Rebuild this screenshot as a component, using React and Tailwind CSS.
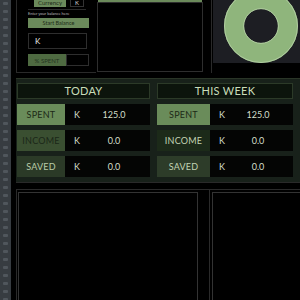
import React from "react";

const ticks = Array.from({ length: 38 });

function Row({ label, value, labelCls, labelW }) {
  return (
    <div className="flex h-[21px] mt-[5px]">
      <div className={`${labelW} flex items-center justify-center text-[9px] tracking-wide ${labelCls}`}>{label}</div>
      <div className="flex-1 bg-[#040504] flex items-center text-[9px] text-[#d4dfcb]">
        <span className="ml-[9px]">K</span>
        <span className="flex-1 text-center pr-[2px]">{value}</span>
      </div>
    </div>
  );
}

export default function App() {
  return (
    <div className="w-[300px] h-[300px] overflow-hidden bg-black flex" style={{ fontFamily: "Lato, 'Noto Sans', sans-serif" }}>
      <div className="w-[11px] h-full bg-[#373c41] flex flex-col items-center gap-[5px] pt-[2px] shrink-0">
        {ticks.map((_, i) => (
          <div key={i} className="w-[5px] h-[3px] bg-[#50565c] rounded-[1px] shrink-0" />
        ))}
      </div>
      <div className="ml-[5px] flex-1 flex flex-col">
        {/* top row */}
        <div className="h-[73px] flex shrink-0">
          <div className="w-[80px] border-l border-b border-[#2a2a2a] relative overflow-hidden">
            <div className="ml-[11px] mr-[6px] -mt-[3px] flex flex-col">
              <div className="flex h-[10px] gap-[4px] pb-0">
                <div className="w-[32px] ml-[6px] bg-[#6b8a5b] text-[6px] text-[#1d2a17] flex items-center justify-center">Currency</div>
                <div className="w-[14px] border border-[#333] flex items-center justify-center text-[6px] text-[#ccc]">K</div>
              </div>
              <div className="h-px bg-[#2a2a2a] mt-[2px] w-[58px]" />
              <div className="text-[4px] text-[#bbb] mt-[2px] leading-none">Enter your balance here</div>
              <div className="h-[10px] mt-[2px] w-[61px] bg-[#6b8a5b] text-[5.5px] text-[#1d2a17] flex items-center justify-center">Start Balance</div>
              <div className="h-[16px] mt-[5px] w-[59px] border border-[#2e2e2e] bg-black flex items-center text-[8px] text-[#e6e6e6] pl-[6px]">K</div>
              <div className="flex h-[12px] mt-[5px]">
                <div className="w-[38px] bg-[#4e6a41] text-[6px] text-[#243320] flex items-center justify-center">% SPENT</div>
                <div className="w-[23px] border border-[#2e2e2e]" />
              </div>
            </div>
          </div>
          <div className="w-[106px] ml-px flex flex-col">
            <div className="h-[2px] bg-[#6b8a5b] mx-px" />
            <div className="flex-1 border border-[#2e2e2e] mb-px" />
          </div>
          <div className="flex-1 ml-[8px] border-l border-[#2a2a2a] pl-px pb-[10px]">
            <div className="h-full bg-[#1d1e23] flex items-center justify-center overflow-visible relative">
              <svg width="80" height="80" viewBox="0 0 80 80" className="absolute left-[8px] -top-[14px]">
                <circle cx="40" cy="40" r="27" fill="none" stroke="#8fb57c" strokeWidth="20" />
                <circle cx="40" cy="40" r="36.5" fill="none" stroke="#b9d3aa" strokeWidth="0.8" />
                <circle cx="40" cy="40" r="17.3" fill="none" stroke="#b9d3aa" strokeWidth="0.8" />
              </svg>
            </div>
          </div>
        </div>
        {/* band */}
        <div className="mt-[5px] h-[104px] bg-[#18211a] flex shrink-0 px-px border-t border-[#2a3527]">
          <div className="w-[133px] flex flex-col pt-[4px]">
            <div className="h-[16px] bg-[#0c140c] border border-[#2c3a28] flex items-center justify-center text-[11px] text-[#c9dcb9] tracking-wide">TODAY</div>
            <Row label="SPENT" value="125.0" labelW="w-[48px]" labelCls="bg-[#6a8c5a] text-[#1c2916]" />
            <Row label="INCOME" value="0.0" labelW="w-[48px]" labelCls="bg-[#3a4f31] text-[#1b2718]" />
            <Row label="SAVED" value="0.0" labelW="w-[48px]" labelCls="bg-[#2b3a27] text-[#b9cca8]" />
          </div>
          <div className="w-[136px] ml-[7px] flex flex-col pt-[4px]">
            <div className="h-[16px] bg-[#0c140c] border border-[#2c3a28] flex items-center justify-center text-[11px] text-[#c9dcb9] tracking-wide">THIS WEEK</div>
            <Row label="SPENT" value="125.0" labelW="w-[53px]" labelCls="bg-[#6a8c5a] text-[#1c2916]" />
            <Row label="INCOME" value="0.0" labelW="w-[53px]" labelCls="bg-[#1c2a19] text-[#c2d3b3]" />
            <Row label="SAVED" value="0.0" labelW="w-[53px]" labelCls="bg-[#2d3c29] text-[#c2d3b3]" />
          </div>
        </div>
        {/* bottom */}
        <div className="border-t border-[#2a2a2a] mt-0 h-[7px] shrink-0" />
        <div className="flex flex-1 border-t border-[#2a2a2a]">
          <div className="w-[186px] border-l border-[#2a2a2a] pl-px pt-[2px]">
            <div className="h-full w-[180px] border-l border-t border-r border-[#333]" />
          </div>
          <div className="w-[7px]" />
          <div className="flex-1 border-l border-[#2a2a2a] pl-[2px] pt-[2px]">
            <div className="h-full border-l border-t border-[#333]" />
          </div>
        </div>
      </div>
    </div>
  );
}
